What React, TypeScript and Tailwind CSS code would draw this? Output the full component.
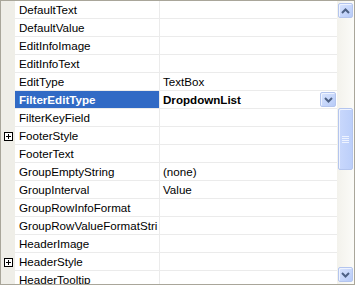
import React from 'react';

type Row = { name: string; value?: string; expand?: boolean; selected?: boolean };

const rows: Row[] = [
  { name: 'DefaultText' },
  { name: 'DefaultValue' },
  { name: 'EditInfoImage' },
  { name: 'EditInfoText' },
  { name: 'EditType', value: 'TextBox' },
  { name: 'FilterEditType', value: 'DropdownList', selected: true },
  { name: 'FilterKeyField' },
  { name: 'FooterStyle', expand: true },
  { name: 'FooterText' },
  { name: 'GroupEmptyString', value: '(none)' },
  { name: 'GroupInterval', value: 'Value' },
  { name: 'GroupRowInfoFormat' },
  { name: 'GroupRowValueFormatStri' },
  { name: 'HeaderImage' },
  { name: 'HeaderStyle', expand: true },
  { name: 'HeaderTooltip' },
];

function Chevron({ up = false }: { up?: boolean }) {
  return (
    <svg width="9" height="6" viewBox="0 0 9 6">
      <path
        d={up ? 'M1 5 L4.5 1.5 L8 5' : 'M1 1 L4.5 4.5 L8 1'}
        fill="none"
        stroke="#4d6185"
        strokeWidth="2"
      />
    </svg>
  );
}

function XpButton({ up, className }: { up?: boolean; className: string }) {
  return (
    <div
      className={`flex items-center justify-center rounded-[2px] border border-[#b4c5ee] bg-gradient-to-br from-[#d9e4fd] to-[#b7cbf8] shadow-[inset_1px_1px_0_#eef3ff] ${className}`}
    >
      <Chevron up={up} />
    </div>
  );
}

function PlusBox() {
  return (
    <div className="relative w-[9px] h-[9px] border border-black bg-white">
      <div className="absolute left-[1px] top-[3px] w-[5px] h-px bg-black" />
      <div className="absolute left-[3px] top-[1px] w-px h-[5px] bg-black" />
    </div>
  );
}

export default function App() {
  return (
    <div
      className="w-[355px] h-[285px] border border-[#a9a69a] flex overflow-hidden bg-white text-[11.6px] text-black"
      style={{ fontFamily: '"Liberation Sans", Arial, sans-serif' }}
    >
      <div className="flex-1 flex flex-col overflow-hidden">
        {rows.map((r) => (
          <div key={r.name} className="flex h-[18px] shrink-0">
            <div className="w-[14px] shrink-0 bg-[#efeee8] flex items-center justify-center">
              {r.expand && <PlusBox />}
            </div>
            <div
              className={`w-[145px] shrink-0 border-b border-r border-[#ebebeb] pl-[4px] flex items-center overflow-hidden whitespace-nowrap ${
                r.selected ? 'bg-[#316ac5] text-white font-bold' : ''
              }`}
            >
              {r.name}
            </div>
            <div
              className={`flex-1 border-b border-[#ebebeb] pl-[3px] flex items-center justify-between whitespace-nowrap ${
                r.selected ? 'font-bold' : ''
              }`}
            >
              <span>{r.value ?? ''}</span>
              {r.selected && <XpButton className="w-[16px] h-[15px] mr-px" />}
            </div>
          </div>
        ))}
      </div>
      <div className="w-[17px] shrink-0 bg-gradient-to-r from-[#f3f2ec] to-[#fbfbf8] flex flex-col items-center py-[2px]">
        <XpButton up className="w-[15px] h-[15px]" />
        <div className="h-[90px]" />
        <div className="w-[15px] h-[62px] rounded-[2px] border border-[#b4c5ee] bg-gradient-to-r from-[#c9d8fc] to-[#bccffa] shadow-[inset_1px_1px_0_#eef3ff] flex items-center justify-center">
          <div className="flex flex-col gap-px">
            <div className="w-[7px] h-px bg-[#eef3ff]" />
            <div className="w-[7px] h-px bg-[#eef3ff]" />
            <div className="w-[7px] h-px bg-[#eef3ff]" />
            <div className="w-[7px] h-px bg-[#eef3ff]" />
          </div>
        </div>
        <div className="flex-1" />
        <XpButton className="w-[15px] h-[15px]" />
      </div>
    </div>
  );
}
